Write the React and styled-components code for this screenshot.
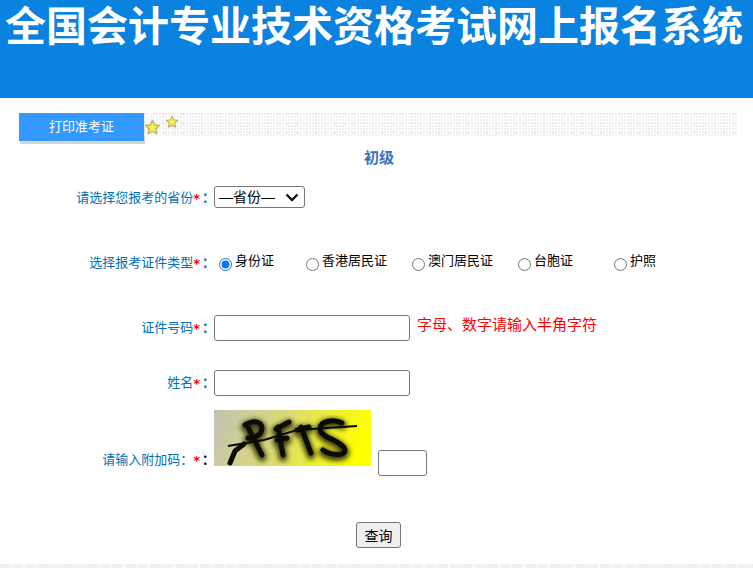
import React from "react";
import styled, { createGlobalStyle } from "styled-components";

const Global = createGlobalStyle`
  html, body { margin: 0; padding: 0; background: #fff; overflow: hidden; }
  body { font-family: "Noto Sans CJK SC", "Liberation Sans", sans-serif; font-size: 13px; }
`;
const Page = styled.div`
  width: 753px; height: 568px; overflow: hidden; display: flex; flex-direction: column; position: relative;
`;
const Header = styled.header`
  height: 98px; background: #0a82e0; flex: none; box-sizing: border-box; padding: 0 0 0 5px;
`;
const SiteTitle = styled.h1`
  margin: 0; color: #fff; font-size: 41px; line-height: 46px; font-weight: 700; white-space: nowrap;
`;
const TabBar = styled.div`
  display: flex; margin: 15px 16px 0 19px; height: 30px; flex: none; position: relative;
`;
const Tab = styled.div`
  width: 125px; height: 28px; background: #3399ff; color: #fff; text-align: center; line-height: 26px;
  font-size: 13px; box-shadow: 1px 3px 0 #d4d4d4; flex: none;
`;
const Dots = styled.div`
  flex: 1; height: 24px;
  background-image:
    radial-gradient(circle at 1px 1px, #e6e6e6 1px, transparent 1px),
    radial-gradient(circle at 1px 1px, #f0f0f0 1px, transparent 1px);
  background-size: 9.5px 9.5px, 3px 3px;
`;
const Star = styled.svg`
  position: absolute; left: ${p => p.$x}px; top: ${p => p.$y}px; width: ${p => p.$s}px; height: ${p => p.$s}px;
`;
const Level = styled.h2`
  margin: 4px 0 0; padding-left: 5px; height: 22px; text-align: center; color: #3b73b9; font-size: 15px; line-height: 20px; font-weight: 700; flex: none;
`;
const Form = styled.form`
  display: flex; flex-direction: column; flex: 1;
`;
const Row = styled.div`
  display: flex; align-items: ${p => p.$align || "center"}; height: ${p => p.$h}px; margin-top: ${p => p.$mt || 0}px; flex: none;
`;
const Label = styled.label`
  width: 213px; text-align: right; color: #0070b8; font-size: 13px; line-height: 20px; white-space: nowrap; flex: none; margin-right: 1px;
  font-weight: 400; padding-top: ${p => p.$pt || 0}px; margin-bottom: ${p => p.$lift || 0}px;
`;
const Req = styled.span`
  color: #f00; font: 700 13px "DejaVu Sans", sans-serif; position: relative; top: 1px;
`;
const Colon = styled.span`
  color: ${p => p.$dark ? "#000" : "#0070b8"}; font-weight: 700; margin: 0 -2px 0 2px;
`;
const SelectWrap = styled.div`
  position: relative; width: 91px; height: 22px; flex: none;
`;
const Select = styled.select`
  appearance: none; width: 100%; height: 100%; box-sizing: border-box; border: 1px solid #767676; border-radius: 3px; background: #fff; color: #000;
  font: 14px "Liberation Sans", "Noto Sans CJK SC", sans-serif; padding: 0 0 0 4px;
`;
const Chevron = styled.svg`
  position: absolute; right: 6px; top: 7px; width: 14px; height: 9px; pointer-events: none;
`;
const Radios = styled.div`
  display: flex; align-items: flex-start; margin-top: -3px;
`;
const RadioLabel = styled.label`
  width: ${p => p.$w}px; display: flex; align-items: flex-start; color: #000; font-size: 13px; line-height: 20px; flex: none; white-space: nowrap;
`;
const Radio = styled.input`
  width: 13px; height: 13px; margin: 8px 3px 0 5px; accent-color: #0a75ee; flex: none;
`;
const TextInput = styled.input`
  width: ${p => p.$w}px; height: 26px; box-sizing: border-box; border: 1px solid #767676; border-radius: 3px; background: #fff; padding: 0 2px; flex: none;
`;
const Hint = styled.span`
  color: #f00; font-size: 15px; margin-left: 7px; margin-top: -8px; white-space: nowrap; line-height: 20px;
`;
const Captcha = styled.svg`
  width: 157px; height: 56px; display: block; flex: none;
`;
const CaptchaInput = styled(TextInput)`
  margin: 40px 0 0 7px;
`;
const Actions = styled.div`
  display: flex; justify-content: center; margin-top: 46px; padding-left: 4px; flex: none;
`;
const Submit = styled.button`
  width: 45px; height: 26px; box-sizing: border-box; border: 1px solid #767676; border-radius: 3px; background: #efefef; color: #000;
  font: 14px "Noto Sans CJK SC", sans-serif; padding: 0; line-height: 22px;
`;
const FooterBand = styled.div`
  position: absolute; left: 0; right: 0; bottom: 0; height: 4px;
  background: repeating-linear-gradient(90deg, #f0f0f0 0 11px, #fafafa 11px 12.5px);
`;

const StarIcon = ({ x, y, s }) => (
  <Star $x={x} $y={y} $s={s} viewBox="0 0 24 24">
    <path d="M12 2l3 6.3 6.8.9-5 4.7 1.3 6.8L12 17.4l-6.100 3.300 1.300-6.800-5-4.700 6.800-.9z"
      fill="#fcf04c" stroke="#bdb97a" strokeWidth="2.200" strokeLinejoin="round" />
  </Star>
);

const ids = [
  ["身份证", 87, true], ["香港居民证", 106], ["澳门居民证", 106], ["台胞证", 96], ["护照", 60],
];

const letters = "M31 15c10-6 20-3 16 7-2 4-9 7-13 6M33 15l15 30M64 17l5 28M62 19l13-7M63 30l10-2M87 17l10 26M83 20l12-3M128 13c-7-4-23-3-22 7 2 8 23 11 25 20 0 6-13 6-22 0";

export default function App() {
  return (
    <Page>
      <Global />
      <Header><SiteTitle>全国会计专业技术资格考试网上报名系统</SiteTitle></Header>
      <TabBar>
        <Tab>打印准考证</Tab>
        <Dots />
        <StarIcon x={125} y={6} s={17} />
        <StarIcon x={146} y={2} s={14} />
      </TabBar>
      <Level>初级</Level>
      <Form onSubmit={e => e.preventDefault()}>
        <Row $h={22} $mt={17}>
          <Label>请选择您报考的省份<Req>*</Req><Colon>：</Colon></Label>
          <SelectWrap>
            <Select defaultValue="p"><option value="p">—省份—</option></Select>
            <Chevron viewBox="0 0 14 9"><path d="M1.500 1.500L7 7l5.500-5.500" fill="none" stroke="#111" strokeWidth="2.400" /></Chevron>
          </SelectWrap>
        </Row>
        <Row $h={24} $mt={42}>
          <Label>选择报考证件类型<Req>*</Req><Colon>：</Colon></Label>
          <Radios>
            {ids.map(([t, w, c]) => (
              <RadioLabel key={t} $w={w}><Radio type="radio" name="idt" defaultChecked={!!c} />{t}</RadioLabel>
            ))}
          </Radios>
        </Row>
        <Row $h={26} $mt={41}>
          <Label $lift={2}>证件号码<Req>*</Req><Colon>：</Colon></Label>
          <TextInput $w={196} />
          <Hint>字母、数字请输入半角字符</Hint>
        </Row>
        <Row $h={26} $mt={29}>
          <Label $lift={2}>姓名<Req>*</Req><Colon>：</Colon></Label>
          <TextInput $w={196} />
        </Row>
        <Row $h={66} $mt={14} $align="flex-start">
          <Label $pt={39}>请输入附加码：<Req>*</Req><Colon $dark>：</Colon></Label>
          <Captcha viewBox="0 0 157 56">
            <defs>
              <linearGradient id="cg" x1="0" y1="0" x2="1" y2="0.15">
                <stop offset="0" stopColor="#c2c2b8" />
                <stop offset="0.5" stopColor="#dcdc70" />
                <stop offset="1" stopColor="#ffff00" />
              </linearGradient>
              <filter id="cb" x="-20%" y="-20%" width="140%" height="150%"><feGaussianBlur stdDeviation="2.800" /></filter>
            </defs>
            <rect width="157" height="56" fill="url(#cg)" />
            <g fill="none" stroke="#3a3a08" strokeWidth="9" strokeLinecap="round" filter="url(#cb)" transform="translate(0 2)">
              <path d={letters} />
            </g>
            <g fill="none" stroke="#0b0b05" strokeWidth="5" strokeLinecap="round" strokeLinejoin="round">
              <path d={letters} />
              <path d="M16 53l5-12 9-7" />
            </g>
            <path d="M14 36l36-6 33-10 60-4" fill="none" stroke="#0b0b05" strokeWidth="2.200" />
          </Captcha>
          <CaptchaInput $w={49} />
        </Row>
        <Actions><Submit type="submit">查询</Submit></Actions>
      </Form>
      <FooterBand />
    </Page>
  );
}
